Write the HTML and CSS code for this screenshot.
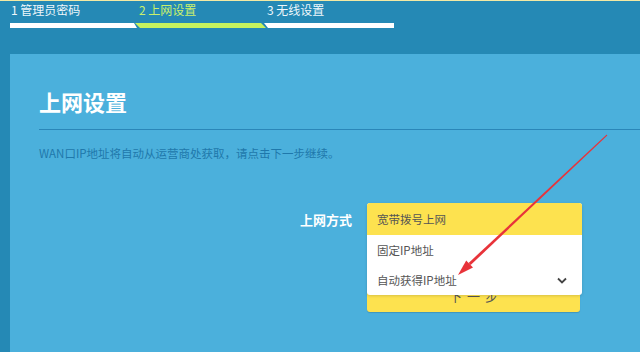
FILE: index.html
```html
<!DOCTYPE html>
<html lang="zh-CN">
<head>
  <meta charset="UTF-8">
  <meta name="viewport" content="width=device-width, initial-scale=1.0">
  <title>上网设置</title>
  <link rel="stylesheet" href="styles.css">
</head>
<body>

  <header class="steps">
    <div class="step done">
      <span class="step-label">1 管理员密码</span>
      <div class="step-bar"></div>
    </div>
    <div class="step current">
      <span class="step-label">2 上网设置</span>
      <div class="step-bar"></div>
    </div>
    <div class="step">
      <span class="step-label">3 无线设置</span>
      <div class="step-bar"></div>
    </div>
  </header>

  <main class="panel">
    <h1 class="panel-title">上网设置</h1>
    <p class="panel-desc">WAN口IP地址将自动从运营商处获取，请点击下一步继续。</p>

    <div class="form-row">
      <label class="form-label">上网方式</label>
      <div class="form-field">
        <ul class="select-menu">
          <li class="select-item hover">宽带拨号上网</li>
          <li class="select-item">固定IP地址</li>
          <li class="select-item selected">自动获得IP地址
            <svg class="check" width="10" height="7" viewBox="0 0 10 7"><path d="M1 1.5 L5 5.5 L9 1.5" fill="none" stroke="#444" stroke-width="1.8"/></svg>
          </li>
        </ul>
        <button class="btn-next">下一步</button>
      </div>
    </div>
  </main>

  <!-- red annotation arrow -->
  <svg class="annotation" width="640" height="352" viewBox="0 0 640 352">
    <polygon points="470.6,264.1 468.6,261.9 606.7,133.6 607.3,134.4" fill="#e8333a"/>
    <polygon points="458,274 473,266.6 466.2,259.4" fill="#e8333a"/>
  </svg>

</body>
</html>
```

FILE: styles.css
```css
body {
  font-family: "Noto Sans CJK SC", "Noto Sans", sans-serif;
  margin: 0;
  padding: 0;
  background-color: #2589b5;
  border-top: 1px solid #f3e9a4;
  height: 351px;
  overflow: hidden;
  position: relative;
}

.steps {
  display: flex;
  padding: 1px 0 0 10px;
  height: 52px;
}

.step {
  width: 128px;
  display: flex;
  flex-direction: column;
}

.step-label {
  font-size: 12px;
  line-height: 16px;
  color: #eef7fb;
  padding-left: 1px;
}

.step.current .step-label {
  color: #c9f06c;
}

.step-bar {
  margin-top: 5px;
  height: 5px;
  background-color: #fff;
  clip-path: polygon(0 0, calc(100% - 4px) 0, calc(100% - 1px) 100%, 0 100%);
}

.step.current .step-bar {
  background-color: #c6f25e;
  margin-left: -3px;
  clip-path: polygon(0 0, calc(100% - 5px) 0, 100% 100%, 5px 100%);
}

.step:last-child .step-bar {
  margin-left: -2px;
  clip-path: polygon(0 0, 100% 0, 100% 100%, 4px 100%);
}

.panel {
  margin-left: 10px;
  height: 298px;
  background-color: #4bb0dc;
  padding: 33px 0 0 29px;
  box-sizing: border-box;
}

.panel-title {
  margin: 0;
  font-size: 22px;
  line-height: 28px;
  font-weight: bold;
  color: #fff;
  padding-bottom: 14px;
  border-bottom: 1px solid #2a86b8;
}

.panel-desc {
  margin: 15px 0 0;
  font-size: 11.5px;
  line-height: 16px;
  color: #1f78ab;
}

.form-row {
  display: flex;
  margin-top: 42px;
}

.form-label {
  width: 328px;
  padding-right: 15px;
  box-sizing: border-box;
  text-align: right;
  font-size: 13px;
  font-weight: bold;
  line-height: 32px;
  color: #fff;
  padding-top: 1px;
}

.form-field {
  position: relative;
  width: 213px;
  padding-top: 32px;
}

.select-menu {
  position: absolute;
  top: 0;
  left: 0;
  width: 215px;
  margin: 0;
  padding: 0;
  list-style: none;
  background-color: #fff;
  border-radius: 3px;
  box-shadow: 0 1px 3px rgba(0, 0, 0, 0.15);
  overflow: hidden;
  z-index: 2;
}

.select-item {
  height: 30px;
  line-height: 30px;
  padding: 0 15px 0 10px;
  font-size: 11.5px;
  color: #555;
  display: flex;
  justify-content: space-between;
  align-items: center;
}

.select-item.hover {
  height: 32px;
  background-color: #fde24f;
}

.btn-next {
  display: block;
  width: 213px;
  height: 34px;
  margin-top: 43px;
  border: none;
  border-radius: 3px;
  background-color: #fde24f;
  box-shadow: 0 1px 1px rgba(0, 0, 0, 0.15);
  font-family: inherit;
  font-size: 13px;
  color: #555;
  letter-spacing: 5px;
  text-indent: 5px;
}

.annotation {
  position: absolute;
  top: 0;
  left: 0;
  z-index: 5;
  pointer-events: none;
}
```
